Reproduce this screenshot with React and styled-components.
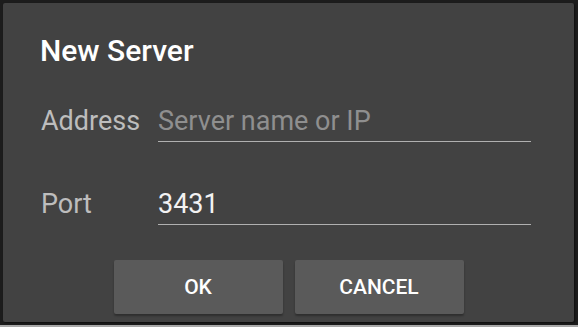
import React from 'react';
import styled, { createGlobalStyle } from 'styled-components';

const GlobalStyle = createGlobalStyle`
  html, body {
    margin: 0;
    padding: 0;
    background: #1c1c1c;
    font-family: Roboto, "Noto Sans", Arial, sans-serif;
  }
`;

const Screen = styled.div`
  width: 578px;
  height: 327px;
  padding: 3px 4px 0 3px;
  box-sizing: border-box;
  display: flex;
  flex-direction: column;
`;

const Dialog = styled.div`
  height: 319px;
  background: #424242;
  border-radius: 2px;
  box-shadow: 1px 1px 2px rgba(0, 0, 0, 0.5);
  padding: 32px 43px 0 38px;
  box-sizing: border-box;
  display: flex;
  flex-direction: column;
`;

const Title = styled.div`
  font-size: 30px;
  line-height: 32px;
  font-weight: 500;
  color: #ffffff;
  margin-left: -1px;
`;

const Row = styled.label`
  display: grid;
  grid-template-columns: 117px 1fr;
  margin-top: ${(p) => p.gap}px;
`;

const Label = styled.span`
  font-size: 27px;
  line-height: 32px;
  color: #bdbdbd;
`;

const Field = styled.input`
  font-family: inherit;
  font-size: 27px;
  line-height: 32px;
  height: 37px;
  box-sizing: border-box;
  padding: 0 0 4px 0;
  margin: 0;
  border: none;
  border-bottom: 1.5px solid #b0b0b0;
  background: transparent;
  color: #f2f2f2;
  outline: none;
  width: 100%;

  &::placeholder {
    color: #8f8f8f;
  }
`;

const Actions = styled.div`
  display: flex;
  justify-content: center;
  gap: 12px;
  margin-top: 35px;
  padding-left: 5px;
`;

const Button = styled.button`
  width: 169px;
  height: 54px;
  border: none;
  border-radius: 2px;
  background: #5a5a5a;
  color: #ffffff;
  font-family: inherit;
  font-size: 21px;
  font-weight: 500;
  box-shadow: 0 2px 2px rgba(0, 0, 0, 0.3);
  cursor: pointer;
`;

const BottomLine = styled.div`
  margin-top: auto;
  height: 2px;
  margin-left: -3px;
  margin-right: -4px;
  background: #a8a8a8;
`;

export default function App() {
  return (
    <>
      <GlobalStyle />
      <Screen>
        <Dialog>
          <Title>New Server</Title>
          <Row gap={38}>
            <Label>Address</Label>
            <Field placeholder="Server name or IP" />
          </Row>
          <Row gap={46}>
            <Label>Port</Label>
            <Field defaultValue="3431" />
          </Row>
          <Actions>
            <Button>OK</Button>
            <Button>CANCEL</Button>
          </Actions>
        </Dialog>
        <BottomLine />
      </Screen>
    </>
  );
}
